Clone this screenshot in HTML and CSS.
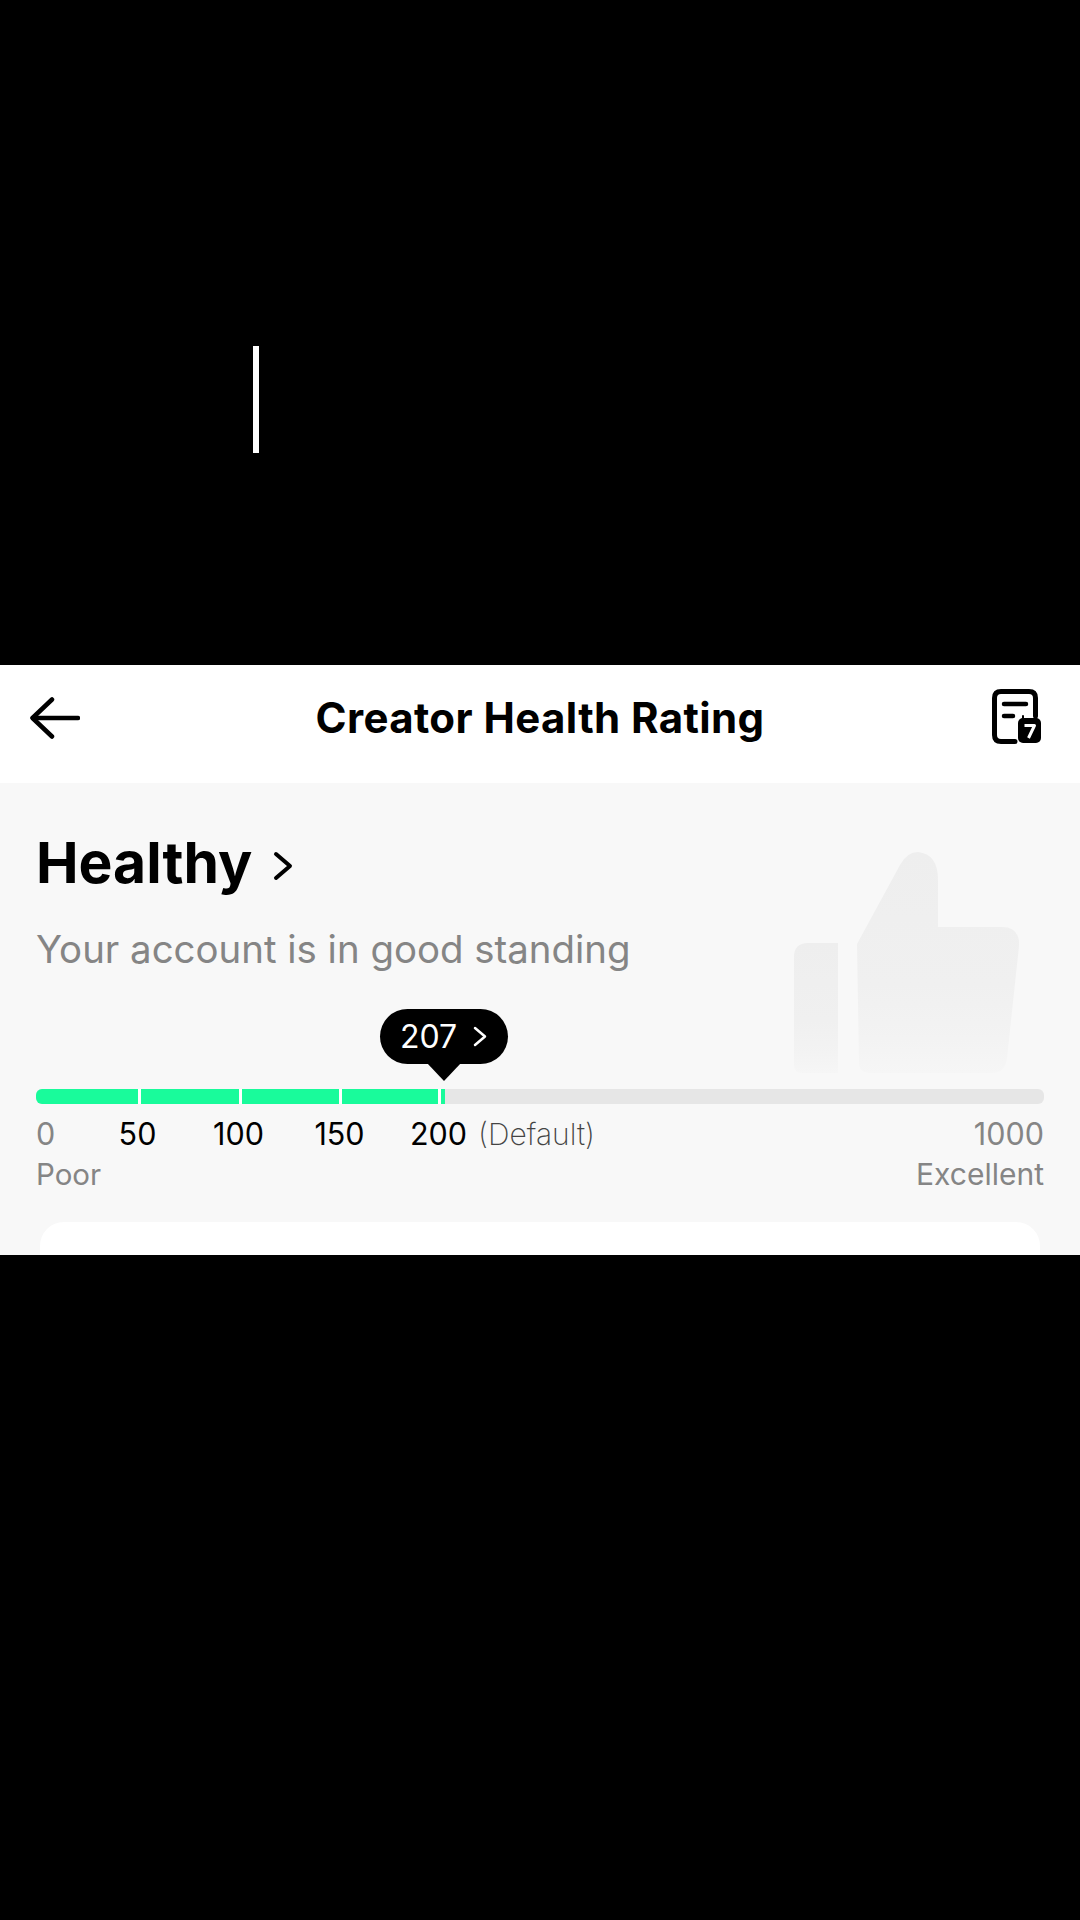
FILE: index.html
```html
<!DOCTYPE html>
<html lang="en">
<head>
  <meta charset="UTF-8" />
  <meta name="viewport" content="width=device-width, initial-scale=1.0"/>
  <title>Creator Health Rating</title>
  <link rel="stylesheet" href="styles.css">
</head>
<body>

  <!-- top of the video frame -->
  <div class="letterbox-top">
    <div class="caret"></div>
  </div>

  <div class="panel">
    <header class="topbar">
      <svg class="back-icon" width="50" height="42" viewBox="0 0 50 42" fill="none" stroke="#000" stroke-width="4.5" stroke-linecap="round" stroke-linejoin="round">
        <path d="M22 2.5 L2.5 21 L22 39.5"/>
        <path d="M3 21 H48"/>
      </svg>
      <h1>Creator Health Rating</h1>
      <svg class="report-icon" width="50" height="56" viewBox="0 0 50 56" fill="none">
        <path d="M23 52.5 H9 Q2.5 52.5 2.5 46 V9 Q2.5 2.5 9 2.5 H37 Q43.5 2.5 43.5 9 V27" stroke="#000" stroke-width="5" stroke-linecap="round"/>
        <path d="M12 15 H34 M12 27 H21" stroke="#000" stroke-width="4.5" stroke-linecap="round"/>
        <rect x="26" y="29" width="23" height="25" rx="5" fill="#000"/>
        <path d="M31 31 V27 M44 31 V27" stroke="#000" stroke-width="2" stroke-linecap="round"/>
        <path d="M32.5 36.5 H42.5 L36.5 49" fill="none" stroke="#fff" stroke-width="3" stroke-linejoin="round"/>
      </svg>
    </header>

    <section class="rating">
      <svg class="thumb" width="226" height="222" viewBox="0 0 226 222">
        <defs>
          <linearGradient id="thumbFade" x1="0" y1="0" x2="0" y2="1">
            <stop offset="0" stop-color="#eeeeee"/>
            <stop offset="0.6" stop-color="#f0f0f0"/>
            <stop offset="0.85" stop-color="#f3f3f3"/>
            <stop offset="1" stop-color="#f6f6f6"/>
          </linearGradient>
        </defs>
        <path d="M14 91 H44 V221 H8 Q0 221 0 212 V105 Q0 91 14 91 Z" fill="url(#thumbFade)"/>
        <path d="M63 92 L106 13 Q113 0 124 0 Q144 2 144 28 V75 H208 Q226 75 225 94 L213 206 Q211 221 198 221 H76 Q65 221 65 210 Z" fill="url(#thumbFade)"/>
      </svg>

      <div class="status">
        <h2>Healthy</h2>
        <svg width="20" height="30" viewBox="0 0 20 30" fill="none" stroke="#000" stroke-width="4" stroke-linecap="round" stroke-linejoin="round">
          <path d="M3 3 L17 15 L3 27"/>
        </svg>
      </div>
      <p class="status-note">Your account is in good standing</p>

      <div class="score-bubble">
        <span>207</span>
        <svg width="14" height="21" viewBox="0 0 14 21" fill="none" stroke="#fff" stroke-width="2.5" stroke-linecap="round" stroke-linejoin="round">
          <path d="M2 2 L12 10.5 L2 19"/>
        </svg>
      </div>

      <div class="bar">
        <div class="seg" style="width: 105px"></div>
        <div class="seg" style="width: 101px"></div>
        <div class="seg" style="width: 100px"></div>
        <div class="seg" style="width: 99px"></div>
        <div class="seg seg-last" style="width: 4px"></div>
      </div>

      <div class="ticks">
        <span class="tick-zero">0</span>
        <span class="tick">50</span>
        <span class="tick">100</span>
        <span class="tick">150</span>
        <span class="tick-default">200</span>
        <span class="default-note">(Default)</span>
        <span class="tick-max">1000</span>
      </div>
      <div class="ends">
        <span class="end-low">Poor</span>
        <span>Excellent</span>
      </div>

      <div class="card"></div>
    </section>
  </div>

  <div class="letterbox-bottom"></div>

</body>
</html>
```

FILE: styles.css
```css
body {
  font-family: Inter, "Liberation Sans", sans-serif;
  margin: 0;
  background-color: black;
  color: black;
}

.letterbox-top {
  height: 665px;
  box-sizing: border-box;
  padding: 346px 0 0 253px;
}

.caret {
  width: 6px;
  height: 107px;
  background-color: white;
}

.letterbox-bottom {
  height: 665px;
}

.panel {
  height: 590px;
  overflow: hidden;
  background-color: #f8f8f8;
}

.topbar {
  height: 118px;
  box-sizing: border-box;
  background-color: white;
  display: grid;
  grid-template-columns: 1fr auto 1fr;
  align-items: center;
  padding: 0 38px 12px 30px;
}

.topbar h1 {
  font-size: 42px;
  font-weight: 700;
  letter-spacing: 0.4px;
  margin: 0 0 0 8px;
  line-height: 48px;
}

.report-icon {
  justify-self: end;
  margin-top: -2px;
}

.rating {
  position: relative;
  padding: 46px 36px 0;
}

.thumb {
  position: absolute;
  left: 794px;
  top: 69px;
}

.status {
  position: relative;
  display: flex;
  align-items: center;
  gap: 21px;
}

.status h2 {
  font-size: 57px;
  font-weight: 700;
  line-height: 68px;
  margin: 0;
}

.status svg {
  margin-top: 6px;
}

.status-note {
  position: relative;
  font-size: 38.4px;
  line-height: 48px;
  color: #858585;
  margin: 28px 0 0;
}

.score-bubble {
  position: relative;
  width: 128px;
  height: 55px;
  box-sizing: border-box;
  margin: 36px 0 25px 344px;
  padding-left: 20px;
  display: flex;
  align-items: center;
  gap: 16px;
  background-color: black;
  color: white;
  border-radius: 28px;
  font-size: 32px;
}

.score-bubble::after {
  content: "";
  position: absolute;
  left: 47px;
  top: 54px;
  border-left: 17px solid transparent;
  border-right: 17px solid transparent;
  border-top: 18px solid black;
}

.bar {
  position: relative;
  height: 15px;
  display: flex;
  background-color: #e6e6e6;
  border-radius: 6px;
  overflow: hidden;
}

.seg {
  box-sizing: border-box;
  background-color: #19fb9b;
  border-right: 3px solid white;
}

.seg-last {
  border-right: none;
}

.ticks {
  display: flex;
  margin-top: 12px;
  font-size: 30.5px;
  line-height: 36px;
}

.tick-zero {
  width: 51px;
  color: #858585;
}

.tick {
  width: 101px;
  text-align: center;
}

.tick-default {
  margin-left: 20px;
}

.default-note {
  margin-left: 11px;
  font-size: 30px;
  font-weight: 200;
  color: #444;
}

.tick-max {
  margin-left: auto;
  color: #858585;
}

.ends {
  display: flex;
  justify-content: space-between;
  margin-top: 4px;
  font-size: 30px;
  line-height: 36px;
  color: #858585;
}

.end-low {
  font-size: 29.5px;
}

.card {
  height: 60px;
  margin: 30px 4px 0;
  background-color: white;
  border-radius: 24px;
}
```
